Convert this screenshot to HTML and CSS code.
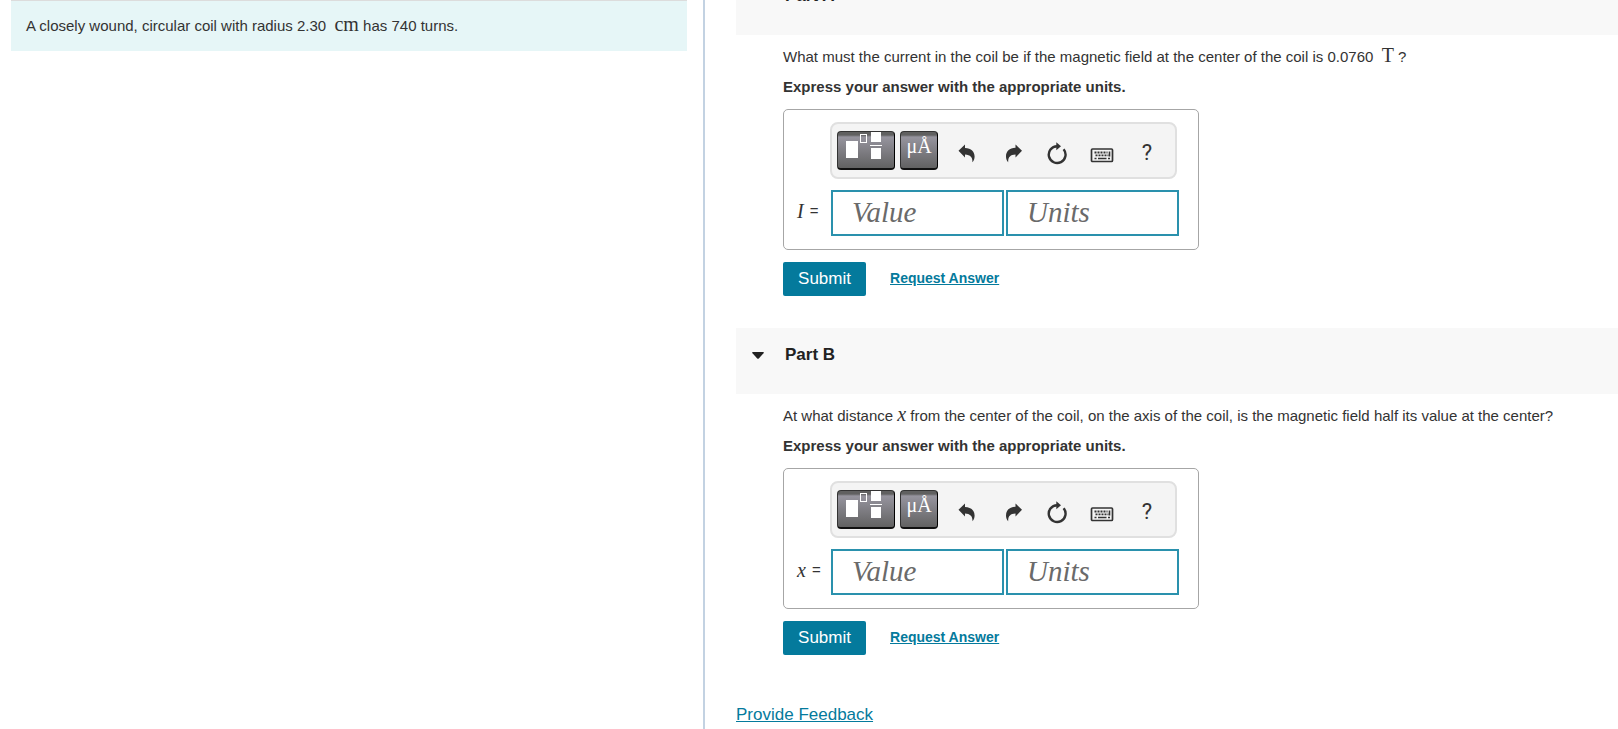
FILE: index.html
```html
<!DOCTYPE html>
<html lang="en">
<head>
<meta charset="utf-8">
<title>Circular coil</title>
<link rel="stylesheet" href="styles.css">
</head>
<body>
<svg class="sprite" aria-hidden="true">
  <symbol id="template" viewBox="0 0 56 37">
    <rect x="8" y="9" width="12" height="17" fill="#fff"/>
    <rect x="22.5" y="2.5" width="6" height="8" fill="none" stroke="#fff"/>
    <rect x="33" y="0" width="10" height="10" fill="#fff"/>
    <rect x="32" y="13" width="12" height="1" fill="#fff"/>
    <rect x="33" y="16" width="10" height="11" fill="#fff"/>
  </symbol>
  <symbol id="undo" viewBox="0 0 24 24">
    <path d="M3.500 9.800 10 3.400v3.600c6.300.2 9.600 3.700 9.600 8.400 0 2-.6 4-2.200 5.800.4-4.800-2-7.600-7.400-7.800v3.200z"/>
  </symbol>
  <symbol id="redo" viewBox="0 0 24 24">
    <path d="M22 9.800 15.500 3.400v3.300C9.400 6.900 6 10.300 6 15.400c0 2.200.6 4.200 2.200 5.800-.3-5 2-7.600 7.300-7.800v3.200z"/>
  </symbol>
  <symbol id="reset" viewBox="0 0 24 24">
    <path d="M12 5.200A8.400 8.400 0 1 0 18.600 8.200" fill="none" stroke="#333" stroke-width="2.400"/>
    <path d="M11.300 1.200 16 5.200l-4.700 4.100z"/>
  </symbol>
  <symbol id="keyboard" viewBox="0 0 24 24">
    <rect x="1.500" y="8" width="21" height="12.500" rx="1" fill="none" stroke="#333" stroke-width="1.700"/>
    <path d="M4.500 11.500h13M5.500 14.400h13" stroke="#333" stroke-width="1.900" stroke-dasharray="2 1"/>
    <path d="M4.500 17.500h2M8 17.500h8.500M18 17.500h2M19.500 10.500v5" stroke="#333" stroke-width="1.600"/>
  </symbol>
  <symbol id="caret" viewBox="0 0 12 7"><path d="M.8 0h10.400q1.200.2.300 1.300L7 6.300q-1 1-2 0L.5 1.300Q-.4.200.8 0z"/></symbol>
</svg>

<main class="page">
  <section class="intro">
    <p class="statement">A closely wound, circular coil with radius 2.30 &nbsp;<span class="math">cm</span> has 740 turns.</p>
  </section>

  <section class="parts">
    <article class="part">
      <h2 class="part-header"><button class="toggle" type="button"><svg class="caret"><use href="#caret"/></svg>Part A</button></h2>
      <form class="part-body">
        <p class="question">What must the current in the coil be if the magnetic field at the center of the coil is 0.0760 &nbsp;<span class="math">T</span> ?</p>
        <p class="question strong">Express your answer with the appropriate units.</p>
        <div class="answer">
          <div class="toolbar">
            <button class="key wide" type="button" aria-label="Templates"><svg><use href="#template"/></svg></button>
            <button class="key" type="button">μÅ</button>
            <div class="tools">
              <button class="tool" type="button" aria-label="Undo"><svg><use href="#undo"/></svg></button>
              <button class="tool" type="button" aria-label="Redo"><svg><use href="#redo"/></svg></button>
              <button class="tool" type="button" aria-label="Reset"><svg><use href="#reset"/></svg></button>
              <button class="tool" type="button" aria-label="Keyboard shortcuts"><svg><use href="#keyboard"/></svg></button>
              <button class="tool" type="button">?</button>
            </div>
          </div>
          <label class="symbol" for="value-a"><i class="math">I</i> =</label>
          <div class="fields">
            <input class="field" id="value-a" type="text" placeholder="Value">
            <input class="field" type="text" placeholder="Units" aria-label="Units">
          </div>
        </div>
        <div class="actions">
          <button class="submit" type="submit">Submit</button>
          <a class="request" href="#">Request Answer</a>
        </div>
      </form>
    </article>

    <article class="part">
      <h2 class="part-header"><button class="toggle" type="button"><svg class="caret"><use href="#caret"/></svg>Part B</button></h2>
      <form class="part-body">
        <p class="question">At what distance <i class="math">x</i> from the center of the coil, on the axis of the coil, is the magnetic field half its value at the center?</p>
        <p class="question strong">Express your answer with the appropriate units.</p>
        <div class="answer">
          <div class="toolbar">
            <button class="key wide" type="button" aria-label="Templates"><svg><use href="#template"/></svg></button>
            <button class="key" type="button">μÅ</button>
            <div class="tools">
              <button class="tool" type="button" aria-label="Undo"><svg><use href="#undo"/></svg></button>
              <button class="tool" type="button" aria-label="Redo"><svg><use href="#redo"/></svg></button>
              <button class="tool" type="button" aria-label="Reset"><svg><use href="#reset"/></svg></button>
              <button class="tool" type="button" aria-label="Keyboard shortcuts"><svg><use href="#keyboard"/></svg></button>
              <button class="tool" type="button">?</button>
            </div>
          </div>
          <label class="symbol" for="value-b"><i class="math">x</i> =</label>
          <div class="fields">
            <input class="field" id="value-b" type="text" placeholder="Value">
            <input class="field" type="text" placeholder="Units" aria-label="Units">
          </div>
        </div>
        <div class="actions">
          <button class="submit" type="submit">Submit</button>
          <a class="request" href="#">Request Answer</a>
        </div>
      </form>
    </article>

    <a class="feedback" href="#">Provide Feedback</a>
  </section>
</main>
</body>
</html>
```

FILE: styles.css
```css
* { box-sizing: border-box; }

body {
  margin: 0;
  background: #fff;
  color: #333;
  font: 15px/30px "Liberation Sans", Arial, sans-serif;
}

p, h2 { margin: 0; }

button {
  font-family: inherit;
  color: inherit;
  cursor: pointer;
}

.sprite { display: none; }

.page {
  display: flex;
  height: 100vh;
  overflow: hidden;
}

.intro {
  flex: 0 0 43.45%;
  padding: 0 16px 0 11px;
}

.statement {
  padding: 10px 15px;
  border-top: 1px solid #dcdcdc;
  background: #e6f6f7;
}

.math {
  font-family: "Liberation Serif", "Times New Roman", serif;
  font-size: 20px;
  line-height: 1;
}

.parts {
  flex: 1;
  min-width: 0;
  padding-left: 31px;
  border-left: 2px solid #c3d2e2;
}

/* The column is scrolled partway through the first header. */
.part:first-child { margin-top: -31px; }

.part-header {
  height: 66px;
  padding: 11px 16px;
  background: #f8f8f8;
}

.toggle {
  display: flex;
  align-items: center;
  gap: 21px;
  padding: 0;
  border: 0;
  background: none;
  color: #222;
  font-size: 17px;
  font-weight: bold;
  line-height: 32px;
}

.caret {
  width: 12px;
  height: 7px;
  fill: #222;
}

.part-body { padding: 7px 0 32px 47px; }

.question { height: 30px; }

.strong { font-weight: bold; }

.answer {
  display: inline-grid;
  grid-template-columns: 34px auto;
  row-gap: 11px;
  margin-top: 7px;
  padding: 12px 19px 13px 12px;
  border: 1px solid #a6a6a6;
  border-radius: 5px;
  vertical-align: top;
}

.toolbar {
  grid-column: 2;
  justify-self: start;
  display: flex;
  gap: 5px;
  height: 57px;
  padding: 7px 16px 0 5px;
  border: 2px solid #e0e0e0;
  border-radius: 8px;
  background: #f4f4f4;
}

.key {
  width: 38px;
  height: 39px;
  padding: 0;
  border: 1px solid #333;
  border-right-color: #000;
  border-bottom: 2px solid #111;
  border-radius: 4px;
  background: linear-gradient(#606060 0 3px, #96949e 5px, #626262);
  color: #fff;
  font: 20px/28px "Liberation Serif", "Times New Roman", serif;
  display: flex;
  justify-content: center;
}

.wide { width: 58px; }

.wide svg {
  width: 56px;
  height: 37px;
}

.tools {
  display: flex;
  gap: 21px;
  padding: 10px 0 0 12px;
}

.tool {
  width: 24px;
  height: 24px;
  padding: 0;
  border: 0;
  background: none;
  font-family: Roboto, sans-serif;
  font-size: 22px;
  line-height: 24px;
}

.tool svg {
  display: block;
  width: 24px;
  height: 24px;
  fill: #333;
}

.symbol {
  display: flex;
  align-items: center;
  gap: 6px;
  padding: 0 0 4px 1px;
}

.fields {
  display: flex;
  gap: 2px;
  padding-left: 1px;
}

.field {
  width: 173px;
  height: 46px;
  padding: 0 19px 2px;
  border: 2px solid #2a91ad;
  border-radius: 0;
  background: #fff;
  color: #333;
  font: italic 29px "Liberation Serif", "Times New Roman", serif;
}

.field::placeholder {
  color: #6a6a6a;
  opacity: 1;
}

.actions {
  display: flex;
  gap: 24px;
  margin-top: 12px;
}

.submit {
  width: 83px;
  height: 34px;
  padding: 0;
  border: 0;
  border-radius: 2px;
  background: #047a9c;
  color: #fff;
  font-size: 17px;
}

.request, .feedback { color: #047a9c; }

.request {
  font-size: 14px;
  font-weight: bold;
  line-height: 32px;
}

.feedback {
  display: inline-block;
  margin-top: 18px;
  font-size: 17px;
  line-height: 20px;
}
```
